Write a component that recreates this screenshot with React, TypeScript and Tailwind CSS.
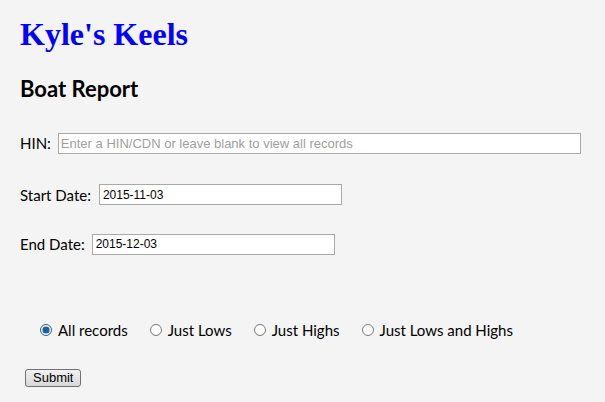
import { useState } from "react";

const sans = "font-['Lato','Open_Sans',sans-serif]";

export default function App() {
  const [mode, setMode] = useState("all");

  const options = [
    { id: "all", label: "All records" },
    { id: "lows", label: "Just Lows" },
    { id: "highs", label: "Just Highs" },
    { id: "both", label: "Just Lows and Highs" },
  ];

  return (
    <div className="min-h-[402px] bg-[#f4f4f4] px-5 pt-[14px] text-black">
      <h1 className="font-['Liberation_Serif',serif] text-[32px] font-bold leading-[40px] text-[#0000ff]">
        Kyle's Keels
      </h1>
      <h2 className={`${sans} mt-[23px] text-[22px] font-bold leading-6`}>Boat Report</h2>

      <form className={`${sans} text-[15px]`} onSubmit={(e) => e.preventDefault()}>
        <div className="mt-[31px] flex items-center">
          <label className="mr-[7px]">HIN:</label>
          <input
            className="h-[21px] w-[523px] border border-[#a9a9a9] bg-white px-[2px] font-['Liberation_Sans',sans-serif] text-[13px] placeholder:text-[#a0a0a0]"
            placeholder="Enter a HIN/CDN or leave blank to view all records"
          />
        </div>
        <div className="mt-[29px] flex items-center">
          <label className="mr-[8px]">Start Date:</label>
          <input
            className="h-[21px] w-[243px] border border-[#a9a9a9] bg-white px-[3px] font-['Liberation_Sans',sans-serif] text-[12px]"
            defaultValue="2015-11-03"
          />
        </div>
        <div className="mt-[27px] flex items-center">
          <label className="mr-[7px]">End Date:</label>
          <input
            className="h-[21px] w-[243px] border border-[#a9a9a9] bg-white px-[3px] font-['Liberation_Sans',sans-serif] text-[12px]"
            defaultValue="2015-12-03"
          />
        </div>

        <div className="mt-[63px] flex items-center gap-[22px] pl-[20px]">
          {options.map((o) => (
            <label key={o.id} className="flex items-center gap-[6px]">
              <input
                type="radio"
                name="mode"
                checked={mode === o.id}
                onChange={() => setMode(o.id)}
                className="m-0 h-[12px] w-[12px] accent-[#1f5f99]"
              />
              {o.label}
            </label>
          ))}
        </div>

        <button
          type="submit"
          className="mt-[28px] ml-[5px] h-[18px] rounded-[3px] border border-[#707070] bg-gradient-to-b from-[#f2f2f2] to-[#d8d8d8] px-[7px] font-['Liberation_Sans',sans-serif] text-[13px] leading-[16px]"
        >
          Submit
        </button>
      </form>
    </div>
  );
}
